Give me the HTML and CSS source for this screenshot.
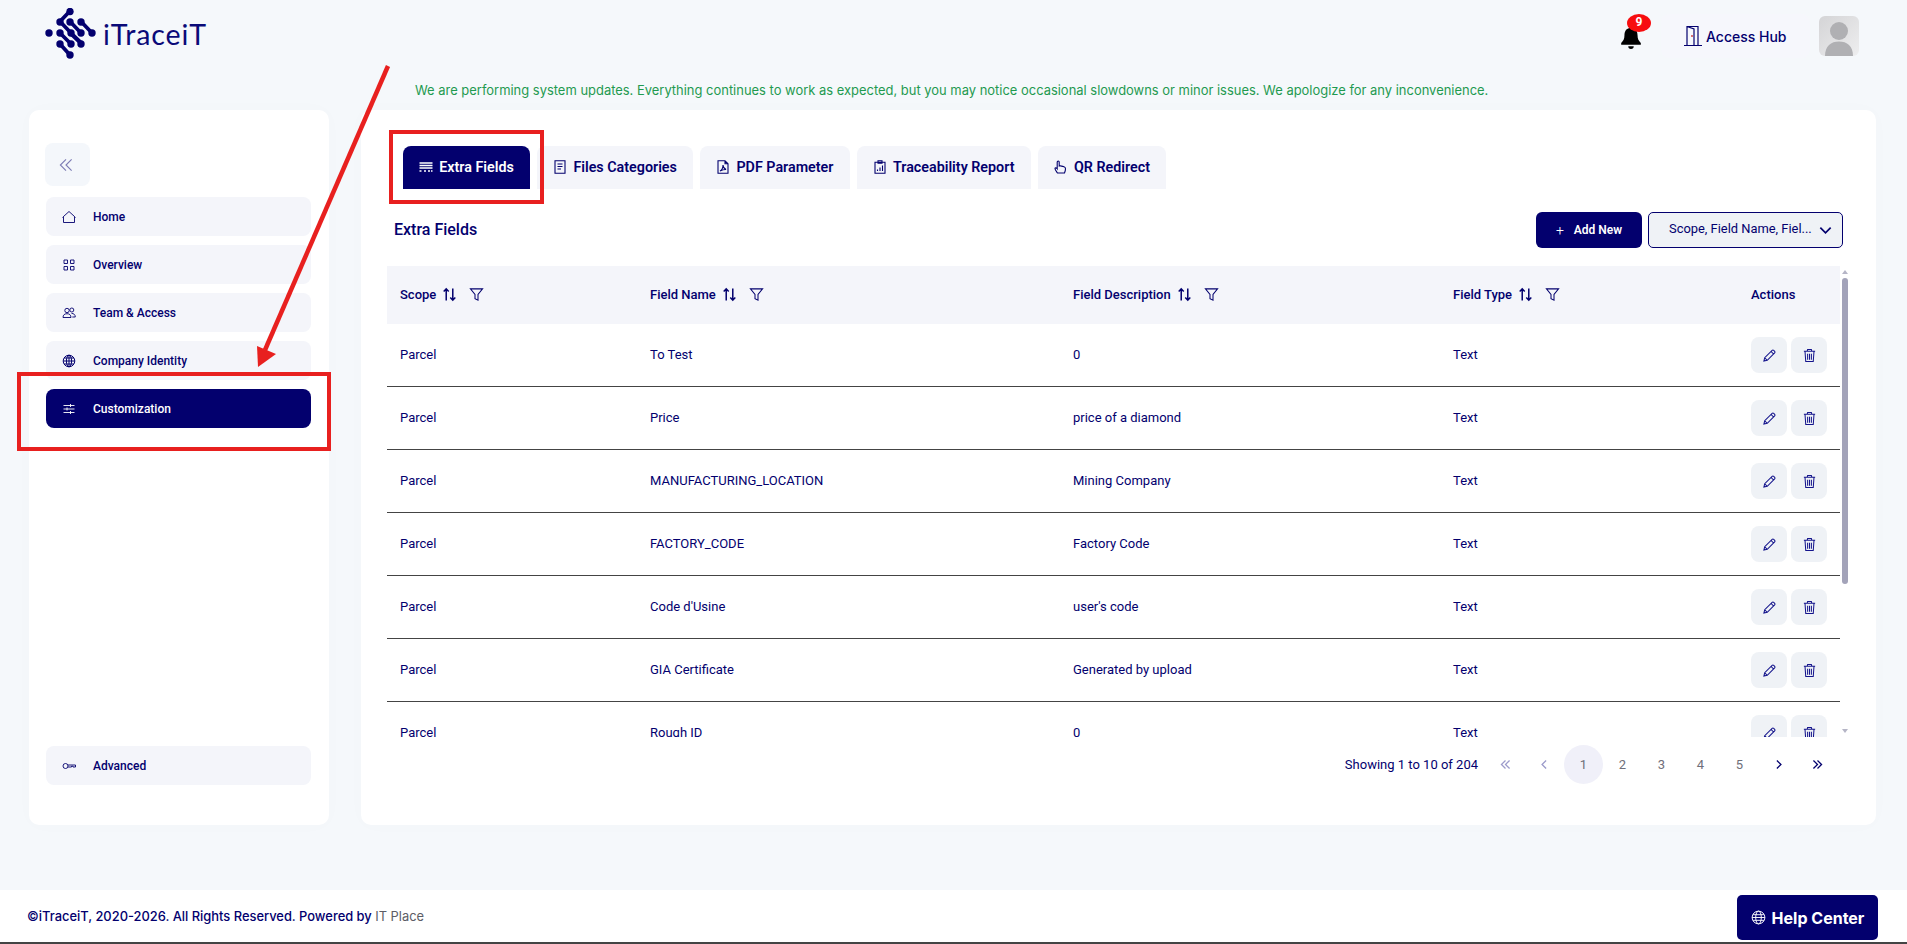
FILE: index.html
```html
<!DOCTYPE html>
<html lang="en">
<head>
<meta charset="utf-8">
<title>iTraceiT - Customization</title>
<link rel="stylesheet" href="styles.css">
</head>
<body>
<svg class="defs" aria-hidden="true">
  <symbol id="i-sort" viewBox="0 0 16 16"><path d="M4.500 14.500V2M1.800 4.700 4.500 2l2.700 2.700M11.500 1.500V14M8.800 11.300l2.700 2.700 2.700-2.700"/></symbol>
  <symbol id="i-filter" viewBox="0 0 16 16"><path d="M1.500 2h13L9.600 8v6L6.400 12.400V8z"/></symbol>
  <symbol id="i-pencil" viewBox="0 0 16 16"><path d="M2 14l.9-3.600L10.800 2.500a1.200 1.200 0 0 1 1.700 0l1 1a1.200 1.200 0 0 1 0 1.700L5.600 13.100zM2.900 10.400l2.700 2.700M9.600 3.700l2.700 2.700"/></symbol>
  <symbol id="i-trash" viewBox="0 0 16 16"><path d="M2 3.500h12M5.500 3.500 6 1.500h4l.5 2M3.200 3.500l.8 11h8l.8-11M6 6v6.500M8 6v6.500M10 6v6.500"/></symbol>
  <symbol id="i-left" viewBox="0 0 16 16"><path d="M10 3 5 8l5 5"/></symbol>
  <symbol id="i-right" viewBox="0 0 16 16"><path d="m6 3 5 5-5 5"/></symbol>
  <symbol id="i-dleft" viewBox="0 0 16 16"><path d="M8 3 3 8l5 5M13 3 8 8l5 5"/></symbol>
  <symbol id="i-dright" viewBox="0 0 16 16"><path d="m3 3 5 5-5 5M8 3l5 5-5 5"/></symbol>
</svg>

<header class="topbar">
  <div class="brand">
    <svg class="brand-mark" viewBox="0 0 52 52" aria-hidden="true">
      <g class="mark-links">
        <path d="M25 3 15 13.500M15 13.500 26 25l11 10.500M25 13.500 36 25M36 13.500 47 25M15 25l11 11M25 25l11 10.500M15 36l10 11"/>
      </g>
      <g class="mark-dots">
        <circle cx="25" cy="3.500" r="3.700"/><circle cx="15" cy="14" r="3.700"/><circle cx="25" cy="14" r="3.700"/><circle cx="36" cy="14" r="3.700"/>
        <circle cx="4" cy="25" r="3.700"/><circle cx="15" cy="25" r="3.700"/><circle cx="26" cy="25" r="3.700"/><circle cx="36" cy="25" r="3.700"/><circle cx="47" cy="25" r="3.700"/>
        <circle cx="15" cy="36" r="3.700"/><circle cx="26" cy="36" r="3.700"/><circle cx="36" cy="36" r="3.700"/><circle cx="25" cy="47" r="3.700"/>
      </g>
    </svg>
    <span class="brand-name">iTraceiT</span>
  </div>
  <div class="top-actions">
    <div class="bell">
      <svg class="bell-icon" viewBox="0 0 20 22" aria-hidden="true"><path d="M10 1a2 2 0 0 1 2 2c3 1 4 3.500 4 6.500 0 3.500 1 5 3 7v1.500H1v-1.500c2-2 3-3.500 3-7C4 6.500 5 4 8 3a2 2 0 0 1 2-2zM7.500 19.500h5a2.500 2.500 0 0 1-5 0z"/></svg>
      <span class="bell-badge">9</span>
    </div>
    <div class="access-hub">
      <svg class="door" viewBox="0 0 18 22" aria-hidden="true"><path class="door-line" d="M0 20.500h18M3 20.500V1.500h11v19M3 1.500l7 2.500v16.500"/><circle class="door-knob" cx="8" cy="11" r=".9"/></svg>
      <span>Access Hub</span>
    </div>
    <div class="avatar">
      <svg viewBox="0 0 40 40" aria-hidden="true"><circle class="avatar-shape" cx="20" cy="15" r="9"/><path class="avatar-shape" d="M6 40c0-10 6-14.500 14-14.500S34 30 34 40z"/></svg>
    </div>
  </div>
</header>

<p class="notice">We are performing system updates. Everything continues to work as expected, but you may notice occasional slowdowns or minor issues. We apologize for any inconvenience.</p>

<div class="workspace">
  <aside class="sidebar">
    <button class="collapse" type="button" aria-label="Collapse">
      <svg class="collapse-ico" viewBox="0 0 16 16" aria-hidden="true"><use href="#i-dleft"/></svg>
    </button>
    <nav class="nav">
      <a class="nav-item"><svg class="nav-icon" viewBox="0 0 14 14" aria-hidden="true"><path d="M1.500 12.500V6.500L7 1.500l5.500 5v6zM.5 7.500l1-1M12.500 6.500l1 1"/></svg><span>Home</span></a>
      <a class="nav-item"><svg class="nav-icon" viewBox="0 0 14 14" aria-hidden="true"><path d="M2 2h3.500v3.500H2zM8.500 2H12v3.500H8.500zM2 8.500h3.500V12H2zM8.500 8.500H12V12H8.500z"/></svg><span>Overview</span></a>
      <a class="nav-item"><svg class="nav-icon" viewBox="0 0 14 14" aria-hidden="true"><circle cx="5" cy="4.500" r="2.200"/><circle cx="9.800" cy="4" r="2"/><path d="M1 11.500c0-2.500 1.500-3.800 4-3.800s4 1.300 4 3.800zM9.500 7.400c2.300 0 3.800 1.300 3.800 3.600h-3"/></svg><span>Team &amp; Access</span></a>
      <a class="nav-item"><svg class="nav-icon nav-icon-bold" viewBox="0 0 14 14" aria-hidden="true"><circle cx="7" cy="7" r="5.800"/><ellipse cx="7" cy="7" rx="2.600" ry="5.800"/><path d="M1.200 7h11.600M2 4h10M2 10h10M7 1.200v11.600"/></svg><span>Company Identity</span></a>
      <a class="nav-item active"><svg class="nav-icon" viewBox="0 0 14 14" aria-hidden="true"><path d="M1.500 3.500h11M1.500 7h11M1.500 10.500h11M8.500 2v3M5 5.500v3M8.500 9v3"/></svg><span>Customization</span></a>
    </nav>
    <a class="nav-item nav-bottom"><svg class="nav-icon" viewBox="0 0 14 14" aria-hidden="true"><circle cx="3.500" cy="7" r="2.500"/><path d="M6 6h7.500v2H11v-.8H9.500V8H6"/></svg><span>Advanced</span></a>
  </aside>

  <main class="panel">
    <div class="tabs">
      <a class="tab active"><svg class="tab-icon" viewBox="0 0 14 14" aria-hidden="true"><path d="M.5 3h13M.5 5.500h13M.5 8h13M.5 11h2M5 11h2M9 11h2M12 11h1.500"/></svg>Extra Fields</a>
      <a class="tab"><svg class="tab-icon" viewBox="0 0 14 14" aria-hidden="true"><path d="M2 .8h10v12.400H2zM4.500 4h5M4.500 6.500h5M4.500 9h3.500"/></svg>Files Categories</a>
      <a class="tab"><svg class="tab-icon" viewBox="0 0 14 14" aria-hidden="true"><path d="M2 .8h7l3 3v9.400H2zM9 .8v3h3M4 11c2-1 3-3.500 3-6 0 2 1 3.500 3 4.500-2 0-4 .5-6 1.500z"/></svg>PDF Parameter</a>
      <a class="tab"><svg class="tab-icon" viewBox="0 0 14 14" aria-hidden="true"><path d="M2 2.200h10v11H2zM5 .8h4v2.400H5zM4.500 11V9.500M7 11V7.500M9.500 11V5.500"/></svg>Traceability Report</a>
      <a class="tab"><svg class="tab-icon" viewBox="0 0 14 14" aria-hidden="true"><path d="M3.500 13c-1-1.500-2.500-3-2.500-4.500 0-.8 1.300-1 2.200.3V2a1 1 0 0 1 2 0v4l1-.2 1.300.3 1.200.3 1.300.4c1 .3 1.500 1 1.500 2 0 1.500-.5 3-1 4.200z"/></svg>QR Redirect</a>
    </div>

    <div class="section-head">
      <h2 class="section-title">Extra Fields</h2>
      <div class="section-tools">
        <button class="btn-add" type="button"><span class="plus">+</span>Add New</button>
        <div class="column-select">
          <span class="column-select-text">Scope, Field Name, Fiel...</span>
          <svg class="chevron" viewBox="0 0 16 16" aria-hidden="true"><path d="m2.500 5 5.500 5.500L13.500 5"/></svg>
        </div>
      </div>
    </div>

    <div class="table-area">
      <div class="table-clip">
        <table class="fields">
          <colgroup><col class="c-scope"><col class="c-name"><col class="c-desc"><col class="c-type"><col class="c-actions"></colgroup>
          <thead>
            <tr>
              <th><span class="th-in">Scope<svg class="sort"><use href="#i-sort"/></svg><svg class="funnel"><use href="#i-filter"/></svg></span></th>
              <th><span class="th-in">Field Name<svg class="sort"><use href="#i-sort"/></svg><svg class="funnel"><use href="#i-filter"/></svg></span></th>
              <th><span class="th-in">Field Description<svg class="sort"><use href="#i-sort"/></svg><svg class="funnel"><use href="#i-filter"/></svg></span></th>
              <th><span class="th-in">Field Type<svg class="sort"><use href="#i-sort"/></svg><svg class="funnel"><use href="#i-filter"/></svg></span></th>
              <th>Actions</th>
            </tr>
          </thead>
          <tbody>
            <tr><td>Parcel</td><td>To Test</td><td>0</td><td>Text</td><td><div class="acts"><button class="act" type="button" aria-label="Edit"><svg class="act-ico"><use href="#i-pencil"/></svg></button><button class="act" type="button" aria-label="Delete"><svg class="act-ico"><use href="#i-trash"/></svg></button></div></td></tr>
            <tr><td>Parcel</td><td>Price</td><td>price of a diamond</td><td>Text</td><td><div class="acts"><button class="act" type="button" aria-label="Edit"><svg class="act-ico"><use href="#i-pencil"/></svg></button><button class="act" type="button" aria-label="Delete"><svg class="act-ico"><use href="#i-trash"/></svg></button></div></td></tr>
            <tr><td>Parcel</td><td>MANUFACTURING_LOCATION</td><td>Mining Company</td><td>Text</td><td><div class="acts"><button class="act" type="button" aria-label="Edit"><svg class="act-ico"><use href="#i-pencil"/></svg></button><button class="act" type="button" aria-label="Delete"><svg class="act-ico"><use href="#i-trash"/></svg></button></div></td></tr>
            <tr><td>Parcel</td><td>FACTORY_CODE</td><td>Factory Code</td><td>Text</td><td><div class="acts"><button class="act" type="button" aria-label="Edit"><svg class="act-ico"><use href="#i-pencil"/></svg></button><button class="act" type="button" aria-label="Delete"><svg class="act-ico"><use href="#i-trash"/></svg></button></div></td></tr>
            <tr><td>Parcel</td><td>Code d'Usine</td><td>user's code</td><td>Text</td><td><div class="acts"><button class="act" type="button" aria-label="Edit"><svg class="act-ico"><use href="#i-pencil"/></svg></button><button class="act" type="button" aria-label="Delete"><svg class="act-ico"><use href="#i-trash"/></svg></button></div></td></tr>
            <tr><td>Parcel</td><td>GIA Certificate</td><td>Generated by upload</td><td>Text</td><td><div class="acts"><button class="act" type="button" aria-label="Edit"><svg class="act-ico"><use href="#i-pencil"/></svg></button><button class="act" type="button" aria-label="Delete"><svg class="act-ico"><use href="#i-trash"/></svg></button></div></td></tr>
            <tr><td>Parcel</td><td>Rough ID</td><td>0</td><td>Text</td><td><div class="acts"><button class="act" type="button" aria-label="Edit"><svg class="act-ico"><use href="#i-pencil"/></svg></button><button class="act" type="button" aria-label="Delete"><svg class="act-ico"><use href="#i-trash"/></svg></button></div></td></tr>
          </tbody>
        </table>
      </div>
      <div class="scrollbar" aria-hidden="true">
        <span class="sb-up"></span>
        <span class="sb-thumb"></span>
        <span class="sb-down"></span>
      </div>
    </div>

    <div class="pager">
      <span class="pager-info">Showing 1 to 10 of 204</span>
      <div class="pager-items">
        <span class="pg off"><svg class="pg-ico"><use href="#i-dleft"/></svg></span>
        <span class="pg off"><svg class="pg-ico"><use href="#i-left"/></svg></span>
        <span class="pg current">1</span>
        <span class="pg">2</span>
        <span class="pg">3</span>
        <span class="pg">4</span>
        <span class="pg">5</span>
        <span class="pg nav-pg"><svg class="pg-ico"><use href="#i-right"/></svg></span>
        <span class="pg nav-pg"><svg class="pg-ico"><use href="#i-dright"/></svg></span>
      </div>
    </div>
  </main>
</div>

<footer class="footer">
  <p class="copyright">©iTraceiT, 2020-2026. All Rights Reserved. Powered by <span class="it-place">IT Place</span></p>
  <button class="help" type="button">
    <svg class="help-ico" viewBox="0 0 16 16" aria-hidden="true"><circle cx="8" cy="8" r="6.800"/><ellipse cx="8" cy="8" rx="3" ry="6.800"/><path d="M1.200 8h13.600M2.200 5h11.600M2.200 11h11.600"/></svg>
    Help Center
  </button>
</footer>

<svg class="annotations" viewBox="0 0 1907 944" aria-hidden="true">
  <rect class="anno-box" x="391" y="132" width="151" height="70"/>
  <rect class="anno-box" x="19" y="374" width="310" height="75"/>
  <path class="anno-line" d="M388 66 265 350"/>
  <path class="anno-head" d="M258 367 257 346 276 354z"/>
</svg>
</body>
</html>
```

FILE: styles.css
```css
* { box-sizing: border-box; }
html, body { margin: 0; padding: 0; }
body {
  position: relative;
  width: 1907px;
  height: 944px;
  overflow: hidden;
  display: flex;
  flex-direction: column;
  background: #f5f8fb;
  color: #03006e;
  font-family: Roboto, "Liberation Sans", sans-serif;
}
.defs { position: absolute; width: 0; height: 0; }
svg { display: block; fill: none; stroke: currentColor; }
button { font-family: inherit; border: 0; cursor: pointer; }
p, h2 { margin: 0; }

/* top bar */
.topbar {
  flex: none;
  height: 80px;
  padding: 7px 48px 0 45px;
  display: flex;
  align-items: flex-start;
  justify-content: space-between;
}
.brand { display: flex; align-items: center; gap: 6px; height: 54px; }
.brand-mark { width: 52px; height: 52px; }
.mark-links path { stroke: #03006e; stroke-width: 3.800; stroke-linecap: round; }
.mark-dots circle { fill: #03006e; stroke: none; }
.brand-name { font-family: Lato, sans-serif; font-weight: 400; font-size: 28.500px; letter-spacing: .9px; color: #0a0a78; line-height: 1; }
.top-actions { display: flex; align-items: center; height: 50px; margin-top: 4px; }
.bell { position: relative; width: 24px; height: 24px; margin-right: 17px; margin-top: 2px; }
.bell-icon { width: 22px; height: 24px; fill: #000; stroke: none; }
.bell-badge {
  position: absolute;
  left: 7px;
  top: -11px;
  width: 24px;
  height: 18px;
  border-radius: 50%;
  background: #f70d0f;
  color: #fff;
  font-size: 12px;
  font-weight: 700;
  text-align: center;
  line-height: 17px;
}
.access-hub {
  width: 149px;
  height: 44px;
  padding-left: 23px;
  display: flex;
  align-items: center;
  gap: 4px;
  background: #f6f7fc;
  border-radius: 8px;
  font-family: Inter, sans-serif;
  font-size: 14px;
  font-weight: 500;
  color: #03006e;
}
.door { width: 18px; height: 22px; }
.door-line { stroke: #03006e; stroke-width: 1.200; }
.door-knob { fill: #c33; stroke: none; }
.avatar {
  width: 40px;
  height: 40px;
  margin-left: 9px;
  border-radius: 6px;
  overflow: hidden;
  background: linear-gradient(135deg, #d4d4d6, #eeeeef);
}
.avatar svg { width: 40px; height: 40px; }
.avatar-shape { fill: #b0b0b3; stroke: none; }

.notice {
  flex: none;
  height: 30px;
  padding: 0 0 10px 415px;
  font-family: Inter, sans-serif;
  font-size: 12.940px;
  line-height: 20px;
  color: #1f9a50;
}

/* workspace */
.workspace {
  flex: 1;
  min-height: 0;
  margin: 0 31px 65px 29px;
  display: grid;
  grid-template-columns: 300px 1fr;
  gap: 32px;
}
.sidebar, .panel {
  background: #fff;
  border-radius: 10px;
  box-shadow: 0 0 20px rgba(40, 50, 90, .015);
}
.sidebar { display: flex; flex-direction: column; padding: 33px 18px 40px 17px; }
.collapse {
  width: 45px;
  height: 43px;
  margin: 0 0 11px -1px;
  padding: 0;
  display: flex;
  align-items: center;
  justify-content: center;
  background: #f4f7fb;
  border-radius: 8px;
  color: #7d7cb5;
}
.collapse-ico { width: 18px; height: 18px; stroke-width: 1; margin-right: 4px; }
.nav { display: flex; flex-direction: column; gap: 9px; }
.nav-item {
  height: 39px;
  padding-left: 16px;
  display: flex;
  align-items: center;
  gap: 17px;
  background: #f4f5fa;
  border-radius: 8px;
  font-size: 12px;
  font-weight: 500;
  color: #03006e;
}
.nav-item.active { background: #03006e; color: #fff; }
.nav-bottom { margin-top: auto; }
.nav-icon { width: 14px; height: 14px; stroke-width: .9; flex: none; }
.nav-icon-bold { stroke-width: 1; }

/* panel */
.panel { display: flex; flex-direction: column; min-width: 0; padding: 36px 28px 0 26px; }
.tabs { display: flex; gap: 7px; padding-left: 16px; }
.tab {
  height: 43px;
  padding: 0 16.250px 2px;
  display: flex;
  align-items: center;
  gap: 6px;
  background: #f4f5fa;
  border-radius: 8px 8px 0 0;
  font-size: 14.300px;
  font-weight: 600;
  color: #03006e;
}
.tab.active { background: #03006e; color: #fff; }
.tab-icon { width: 14px; height: 16px; stroke-width: 1.100; flex: none; }
.tab.active .tab-icon { stroke-width: 1.300; }

.section-head { display: flex; justify-content: space-between; align-items: flex-start; margin-top: 23px; height: 36px; padding-right: 5px; }
.section-title { padding: 9px 0 0 7px; font-size: 16px; line-height: 18px; font-weight: 500; color: #03006e; }
.section-tools { display: flex; gap: 6px; }
.btn-add {
  width: 106px;
  height: 36px;
  display: flex;
  align-items: center;
  justify-content: center;
  gap: 10px;
  padding: 0;
  background: #03006e;
  border-radius: 6px;
  color: #fff;
  font-size: 12px;
  font-weight: 600;
}
.plus { font-weight: 300; font-size: 14px; }
.column-select {
  width: 195px;
  height: 36px;
  padding: 0 9px 0 20px;
  display: flex;
  align-items: center;
  justify-content: space-between;
  background: #eff2f6;
  border: 1px solid #03006e;
  border-radius: 5px;
  font-size: 12.900px;
}
.column-select-text { position: relative; top: -2px; }
.chevron { width: 15px; height: 15px; stroke-width: 1.800; }

/* table */
.table-area {
  flex: none;
  display: flex;
  gap: 2px;
  width: 1461px;
  height: 471px;
  margin-top: 18px;
}
.table-clip { width: 1453px; overflow: hidden; }
.scrollbar { width: 6px; display: flex; flex-direction: column; }
.sb-up, .sb-down { flex: none; height: 12px; position: relative; }
.sb-up::after, .sb-down::after {
  content: "";
  position: absolute;
  left: 0;
  top: 4px;
  width: 6px;
  height: 4px;
  background: #b5b5c6;
}
.sb-up::after { clip-path: polygon(50% 0, 100% 100%, 0 100%); }
.sb-down::after { clip-path: polygon(0 0, 100% 0, 50% 100%); }
.sb-thumb { flex: none; height: 306px; background: #a3a3b9; border-radius: 3px; }
.sb-down { margin-top: auto; }
.fields { width: 1453px; table-layout: fixed; border-collapse: separate; border-spacing: 0; font-size: 13px; }
.c-scope { width: 250px; }
.c-name { width: 423px; }
.c-desc { width: 380px; }
.c-type { width: 298px; }
.c-actions { width: 102px; }
.fields th {
  height: 58px;
  padding: 0 0 2px 13px;
  background: #f4f5fa;
  text-align: left;
  font-weight: 500;
  font-size: 13px;
}
.th-in { display: inline-flex; align-items: center; }
.sort { width: 15px; height: 15px; margin-left: 6px; stroke-width: 1.600; }
.funnel { width: 15px; height: 15px; margin-left: 12px; stroke-width: 1.100; }
.fields td {
  height: 63px;
  padding: 0 0 2px 13px;
  border-bottom: 1px solid #444;
  font-weight: 400;
}
.acts { display: flex; gap: 4px; position: relative; top: 1px; }
.act {
  width: 36px;
  height: 36px;
  padding: 0;
  display: flex;
  align-items: center;
  justify-content: center;
  background: #eff2f6;
  border-radius: 8px;
  color: #14148c;
}
.act-ico { width: 15px; height: 15px; stroke-width: 1.100; }

/* pager */
.pager { display: flex; justify-content: flex-end; align-items: center; gap: 8px; margin-top: 8px; padding-right: 11px; }
.pager-info { font-size: 13px; }
.pager-items { display: flex; }
.pg {
  width: 39px;
  height: 39px;
  display: flex;
  align-items: center;
  justify-content: center;
  font-size: 13px;
  color: #6f6f7a;
}
.pg.current { background: #f0f0f9; border-radius: 50%; }
.pg.off { color: #9c9bcb; }
.pg.nav-pg { color: #03006e; }
.pg-ico { width: 13px; height: 13px; stroke-width: 1.600; }

/* footer */
.footer {
  flex: none;
  height: 54px;
  padding: 5px 29px 0 27px;
  display: flex;
  justify-content: space-between;
  align-items: flex-start;
  background: #fff;
  border-bottom: 2px solid #444;
}
.copyright { font-family: Inter, sans-serif; font-size: 12.900px; font-weight: 500; line-height: 18px; padding-top: 13px; color: #03006e; }
.it-place { color: #5d5d66; font-weight: 400; }
.help {
  width: 141px;
  height: 45px;
  display: flex;
  align-items: center;
  justify-content: center;
  gap: 6px;
  padding: 0;
  background: #03006e;
  border-radius: 5px;
  color: #fff;
  font-family: Inter, sans-serif;
  font-size: 16px;
  font-weight: 700;
}
.help-ico { width: 15px; height: 15px; stroke-width: 1; }

/* red annotations drawn over the screenshot */
.annotations { position: absolute; left: 0; top: 0; width: 1907px; height: 944px; pointer-events: none; }
.anno-box { fill: none; stroke: #e8201f; stroke-width: 4; }
.anno-line { stroke: #e8201f; stroke-width: 4.500; }
.anno-head { fill: #e8201f; stroke: none; }
```
